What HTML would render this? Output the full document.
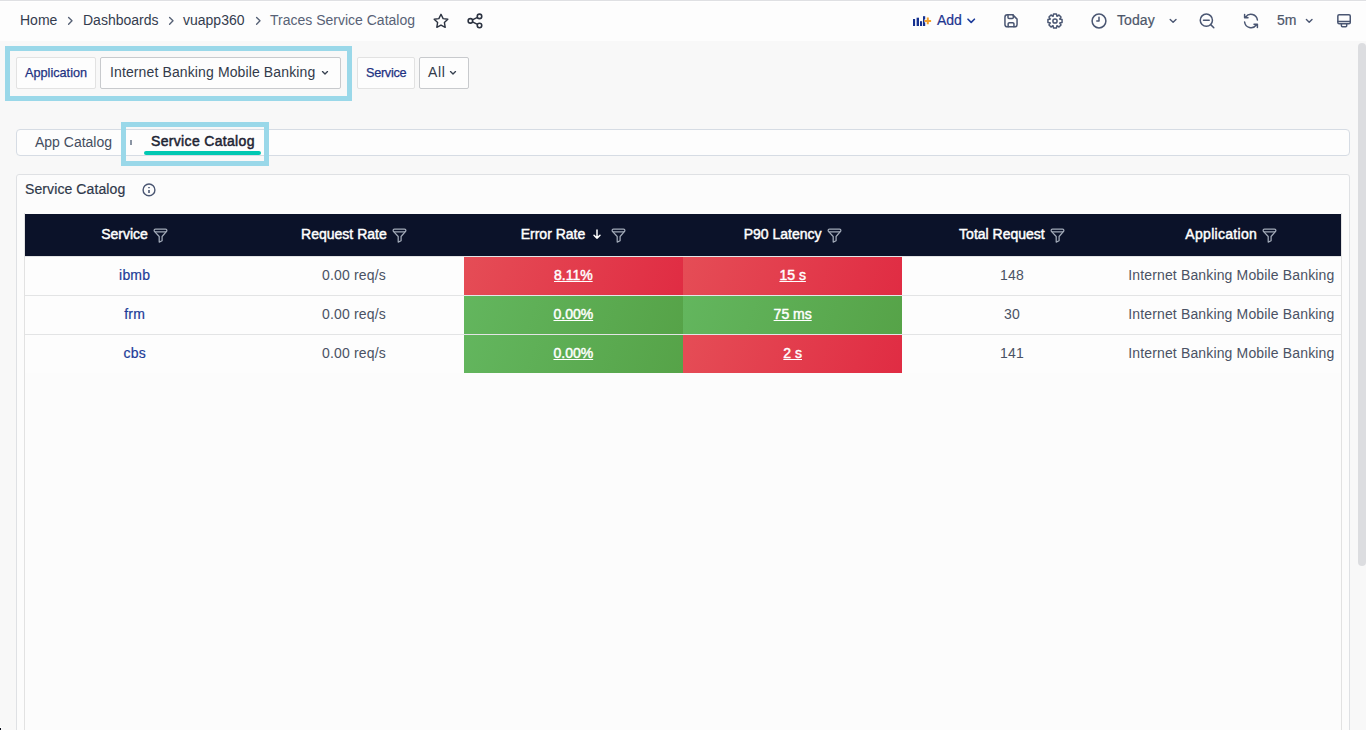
<!DOCTYPE html>
<html><head><meta charset="utf-8">
<style>
*{box-sizing:border-box;margin:0;padding:0}
html,body{width:1366px;height:730px;overflow:hidden}
body{background:#f8f8f8;font-family:"Liberation Sans",sans-serif;color:#323a4a;position:relative}
.a{position:absolute;white-space:nowrap}
#topline{left:0;top:0;width:1366px;height:1px;background:#dfe0e3}
#hdr{left:0;top:1px;width:1366px;height:40px;background:#fdfdfd;border-top:1px solid #fff}
.bc{top:12px;font-size:14px;line-height:16px;color:#343c4e}
.ic{stroke:#4a5672;fill:none;stroke-width:1.5;stroke-linecap:round;stroke-linejoin:round}
.hl{border:5px solid #9ad8e9}
.lbl{background:#fdfdfd;border:1px solid #e2e2e2;border-radius:2px}
.dd{background:#fdfdfd;border:1px solid #c8cacd;border-radius:2px}
.lbltxt{font-size:12.7px;color:#1d3282;line-height:14px;-webkit-text-stroke:0.25px #1d3282}
.ddtxt{font-size:14px;color:#323a4a;line-height:16px}
#tabbar{left:16px;top:129px;width:1334px;height:27px;background:#fdfdfd;border:1px solid #d6dce4;border-radius:4px}
#panel{left:16px;top:174px;width:1334px;height:600px;background:#fcfcfc;border:1px solid #dfe1e4;border-radius:3px}
#tblbox{left:24px;top:213px;width:1318px;height:600px;border-left:1px solid #e2e2e2;border-right:1px solid #e2e2e2}
#thead{left:25px;top:214px;width:1316px;height:42px;background:#0b1229}
.th{font-size:14px;color:#ffffff;line-height:16px;-webkit-text-stroke:0.45px #fff}
.rowl{left:25px;width:1316px;height:1px;background:#e3e4e5}
.td{font-size:14px;color:#4a5264;line-height:16px;letter-spacing:0.15px}
.svc{color:#1d3c98;-webkit-text-stroke:0.2px #1d3c98;letter-spacing:0.2px}
.red{background:linear-gradient(110deg,#e54d56 0%,#e02c43 100%)}
.grn{background:linear-gradient(110deg,#63b65e 0%,#56a348 100%)}
.cv{font-size:14px;-webkit-text-stroke:0.45px #fff;color:#fff;text-decoration:underline;text-underline-offset:1px;line-height:16px}
</style></head>
<body>
<div class="a" id="topline"></div><div class="a" id="hdr"></div>
<div class="a bc" style="left:20px">Home</div>
<svg class="a" style="left:67px;top:16px" width="7" height="10" viewBox="0 0 7 10"><path d="M1.6 1.4l3.4 3.4-3.4 3.4" stroke="#566175" stroke-width="1.35" fill="none" stroke-linecap="round" stroke-linejoin="round"/></svg>
<div class="a bc" style="left:83px">Dashboards</div>
<svg class="a" style="left:168px;top:16px" width="7" height="10" viewBox="0 0 7 10"><path d="M1.6 1.4l3.4 3.4-3.4 3.4" stroke="#566175" stroke-width="1.35" fill="none" stroke-linecap="round" stroke-linejoin="round"/></svg>
<div class="a bc" style="left:183px">vuapp360</div>
<svg class="a" style="left:255px;top:16px" width="7" height="10" viewBox="0 0 7 10"><path d="M1.6 1.4l3.4 3.4-3.4 3.4" stroke="#566175" stroke-width="1.35" fill="none" stroke-linecap="round" stroke-linejoin="round"/></svg>
<div class="a bc" style="left:270px;color:#586276">Traces Service Catalog</div>
<svg class="a" style="left:432px;top:13px" width="18" height="16" viewBox="0 0 18 16"><path transform="translate(9 1.3) scale(0.94) translate(-9 -1.3)" d="M9 1.3l2.25 4.55 5 .73-3.62 3.53.86 4.99L9 12.75l-4.48 2.35.86-4.99L1.75 6.58l5-.73z" stroke="#2b3240" stroke-width="1.5" fill="none" stroke-linejoin="round"/></svg>
<svg class="a" style="left:466px;top:13px" width="18" height="16" viewBox="0 0 18 16"><g stroke="#2b3240" stroke-width="1.6" fill="none"><circle cx="4.4" cy="7.9" r="2.25"/><circle cx="13.5" cy="3.4" r="2.25"/><circle cx="13.5" cy="12.5" r="2.25"/><path d="M6.4 6.9l5.1-2.5M6.4 8.9l5.1 2.5"/></g></svg>
<svg class="a" style="left:912px;top:14px" width="20" height="14" viewBox="0 0 20 14"><rect x="1" y="5" width="2.1" height="7" fill="#14308f"/><rect x="4.6" y="3.7" width="2.4" height="8.3" fill="#14308f"/><rect x="8" y="7.2" width="2.1" height="4.8" fill="#14308f"/><rect x="11" y="2.2" width="2.2" height="9.8" fill="#14308f"/><path d="M15.8 3.6v6.6M12.5 6.9h6.6" stroke="#fdfdfd" stroke-width="3.2"/><path d="M15.8 3.6v6.6M12.5 6.9h6.6" stroke="#f5a02a" stroke-width="2"/></svg>
<div class="a" style="left:937px;top:12px;font-size:14px;line-height:16px;color:#1d3590;-webkit-text-stroke:0.2px #1d3590">Add</div>
<svg class="a" style="left:967px;top:18px" width="9" height="6" viewBox="0 0 9 6"><path d="M1 1.2L4.2 4.4 7.4 1.2" stroke="#1b3a9a" stroke-width="1.6" fill="none" stroke-linecap="round" stroke-linejoin="round"/></svg>
<svg class="a" style="left:1003px;top:13px" width="16" height="16" viewBox="0 0 16 16"><path class="ic" d="M4.3 1.85H9.8L14.05 6.1V11.5a2.35 2.35 0 0 1-2.35 2.35H4.3a2.35 2.35 0 0 1-2.35-2.35V4.2a2.35 2.35 0 0 1 2.35-2.35z"/><path class="ic" d="M5 1.9v2.5a1 1 0 0 0 1 1h3.3a1 1 0 0 0 1-1V1.9M5.15 13.8v-2.8a1.2 1.2 0 0 1 1.2-1.2h3.4a1.2 1.2 0 0 1 1.2 1.2v2.8"/></svg>
<svg class="a" style="left:1046px;top:12px" width="18" height="18" viewBox="0 0 18 18"><path class="ic" d="M13.70 7.01L16.06 7.57L16.06 10.43L13.70 10.99L13.73 10.92L15.00 12.98L12.98 15.00L10.92 13.73L10.99 13.70L10.43 16.06L7.57 16.06L7.01 13.70L7.08 13.73L5.02 15.00L3.00 12.98L4.27 10.92L4.30 10.99L1.94 10.43L1.94 7.57L4.30 7.01L4.27 7.08L3.00 5.02L5.02 3.00L7.08 4.27L7.01 4.30L7.57 1.94L10.43 1.94L10.99 4.30L10.92 4.27L12.98 3.00L15.00 5.02L13.73 7.08z"/><circle class="ic" cx="9" cy="9" r="2.1"/></svg>
<svg class="a" style="left:1090px;top:12px" width="18" height="18" viewBox="0 0 18 18"><circle class="ic" cx="9" cy="9" r="6.9"/><path class="ic" d="M9 5.2V9H6.8"/></svg>
<div class="a" style="left:1117px;top:12px;font-size:14px;line-height:16px;color:#4d576a;letter-spacing:0.1px;-webkit-text-stroke:0.2px #4d576a">Today</div>
<svg class="a" style="left:1169px;top:18px" width="9" height="6" viewBox="0 0 9 6"><path d="M1.2 1.5L4.1 4.3 7 1.5" stroke="#4a5672" stroke-width="1.4" fill="none" stroke-linecap="round" stroke-linejoin="round"/></svg>
<svg class="a" style="left:1198px;top:12px" width="18" height="18" viewBox="0 0 18 18"><circle class="ic" cx="8.35" cy="8.2" r="6.1"/><path class="ic" d="M5.5 8.2h5.7M12.7 12.6l3.1 3.1"/></svg>
<svg class="a" style="left:1242px;top:12px" width="18" height="18" viewBox="0 0 18 18"><path class="ic" d="M15.4 8A6.5 6.5 0 0 0 3.7 5M2.6 2.4v3.4H6M2.6 10a6.5 6.5 0 0 0 11.7 3M15.4 15.6v-3.4H12"/></svg>
<div class="a" style="left:1277px;top:12px;font-size:14px;line-height:16px;color:#4d576a;-webkit-text-stroke:0.2px #4d576a">5m</div>
<svg class="a" style="left:1305px;top:18px" width="9" height="6" viewBox="0 0 9 6"><path d="M1.4 1.5L4.2 4.3 7 1.5" stroke="#4a5672" stroke-width="1.4" fill="none" stroke-linecap="round" stroke-linejoin="round"/></svg>
<svg class="a" style="left:1335px;top:12px" width="18" height="18" viewBox="0 0 18 18"><rect class="ic" x="2.85" y="2.65" width="12.4" height="9.2" rx="1.3"/><path class="ic" d="M2.85 9.5h12.4M6.4 12.2v1.6a1 1 0 0 0 1 1h3.3a1 1 0 0 0 1-1v-1.6"/></svg>
<div class="a" style="left:1358px;top:43px;width:8px;height:523px;background:#dcdde0;border-radius:4px"></div>
<div class="a hl" style="left:5px;top:46px;width:347px;height:55px"></div>
<div class="a lbl" style="left:16px;top:57px;width:80px;height:32px"></div>
<div class="a lbltxt" style="left:25px;top:66px">Application</div>
<div class="a dd" style="left:100px;top:57px;width:241px;height:32px"></div>
<div class="a ddtxt" style="left:110px;top:64px;letter-spacing:0.12px">Internet Banking Mobile Banking</div>
<svg class="a" style="left:321px;top:70px" width="8" height="6" viewBox="0 0 8 6"><path d="M1.5 1.6L4 4.1l2.5-2.5" stroke="#36404f" stroke-width="1.35" fill="none" stroke-linecap="round" stroke-linejoin="round"/></svg>
<div class="a lbl" style="left:357px;top:57px;width:58px;height:32px"></div>
<div class="a lbltxt" style="left:366px;top:66px;letter-spacing:-0.3px">Service</div>
<div class="a dd" style="left:419px;top:57px;width:50px;height:32px"></div>
<div class="a ddtxt" style="left:428px;top:64px;letter-spacing:0.6px">All</div>
<svg class="a" style="left:449px;top:70px" width="8" height="6" viewBox="0 0 8 6"><path d="M1.5 1.6L4 4.1l2.5-2.5" stroke="#36404f" stroke-width="1.35" fill="none" stroke-linecap="round" stroke-linejoin="round"/></svg>
<div class="a" id="tabbar"></div>
<div class="a" style="left:35px;top:134px;font-size:14px;line-height:16px;color:#444d60">App Catalog</div>
<div class="a hl" style="left:121px;top:122px;width:148px;height:44px"></div>
<div class="a" style="left:130px;top:140px;width:2px;height:5px;background:#8a94a3"></div>
<div class="a" style="left:151px;top:133px;font-size:14px;line-height:16px;color:#1e2433;letter-spacing:0.33px;-webkit-text-stroke:0.5px #1e2433">Service Catalog</div>
<div class="a" style="left:144px;top:151px;width:117px;height:4px;border-radius:2px;background:#00c8b2"></div>
<div class="a" id="panel"></div>
<div class="a" style="left:25px;top:181px;font-size:14px;line-height:16px;color:#2f384a;-webkit-text-stroke:0.2px #2f384a;letter-spacing:0.1px">Service Catalog</div>
<svg class="a" style="left:141px;top:182px" width="16" height="16" viewBox="0 0 16 16"><circle cx="8" cy="7.9" r="5.9" stroke="#4a5672" stroke-width="1.4" fill="none"/><path d="M8 8.9v1.2" stroke="#4a5672" stroke-width="1.6" stroke-linecap="square"/><rect x="7.2" y="5" width="1.6" height="1.2" fill="#4a5672"/></svg>
<div class="a" id="tblbox"></div><div class="a" id="thead"></div>
<div class="a th" style="left:25.00px;top:213px;width:219.33px;height:42px;display:flex;align-items:center;justify-content:center"><span style="letter-spacing:0px">Service</span><svg width="15" height="15" viewBox="0 0 15 15" style="margin-left:5.2px;flex:none;position:relative;top:1px"><g stroke="#a2aab8" stroke-width="1.25" fill="none" stroke-linejoin="round"><rect x="1.1" y="1.2" width="12.8" height="2.7" rx="1.35"/><path d="M1.9 3.9l4.3 4.6v5.6l2.9-1.4V8.5l4-4.6"/></g></svg></div>
<div class="a th" style="left:244.33px;top:213px;width:219.33px;height:42px;display:flex;align-items:center;justify-content:center"><span style="letter-spacing:0px">Request Rate</span><svg width="15" height="15" viewBox="0 0 15 15" style="margin-left:5.2px;flex:none;position:relative;top:1px"><g stroke="#a2aab8" stroke-width="1.25" fill="none" stroke-linejoin="round"><rect x="1.1" y="1.2" width="12.8" height="2.7" rx="1.35"/><path d="M1.9 3.9l4.3 4.6v5.6l2.9-1.4V8.5l4-4.6"/></g></svg></div>
<div class="a th" style="left:463.67px;top:213px;width:219.33px;height:42px;display:flex;align-items:center;justify-content:center"><span style="letter-spacing:0px">Error Rate</span><svg width="10" height="12" viewBox="0 0 10 12" style="margin-left:7px;flex:none"><path d="M5 2v8.3M2 7.3L5 10.3l3-3" stroke="#fff" stroke-width="1.5" fill="none" stroke-linecap="round" stroke-linejoin="round"/></svg><svg width="15" height="15" viewBox="0 0 15 15" style="margin-left:8.7px;flex:none;position:relative;top:1px"><g stroke="#a2aab8" stroke-width="1.25" fill="none" stroke-linejoin="round"><rect x="1.1" y="1.2" width="12.8" height="2.7" rx="1.35"/><path d="M1.9 3.9l4.3 4.6v5.6l2.9-1.4V8.5l4-4.6"/></g></svg></div>
<div class="a th" style="left:683.00px;top:213px;width:219.33px;height:42px;display:flex;align-items:center;justify-content:center"><span style="letter-spacing:0px">P90 Latency</span><svg width="15" height="15" viewBox="0 0 15 15" style="margin-left:5.2px;flex:none;position:relative;top:1px"><g stroke="#a2aab8" stroke-width="1.25" fill="none" stroke-linejoin="round"><rect x="1.1" y="1.2" width="12.8" height="2.7" rx="1.35"/><path d="M1.9 3.9l4.3 4.6v5.6l2.9-1.4V8.5l4-4.6"/></g></svg></div>
<div class="a th" style="left:902.33px;top:213px;width:219.33px;height:42px;display:flex;align-items:center;justify-content:center"><span style="letter-spacing:0px">Total Request</span><svg width="15" height="15" viewBox="0 0 15 15" style="margin-left:5.2px;flex:none;position:relative;top:1px"><g stroke="#a2aab8" stroke-width="1.25" fill="none" stroke-linejoin="round"><rect x="1.1" y="1.2" width="12.8" height="2.7" rx="1.35"/><path d="M1.9 3.9l4.3 4.6v5.6l2.9-1.4V8.5l4-4.6"/></g></svg></div>
<div class="a th" style="left:1121.67px;top:213px;width:219.33px;height:42px;display:flex;align-items:center;justify-content:center"><span style="letter-spacing:0.3px">Application</span><svg width="15" height="15" viewBox="0 0 15 15" style="margin-left:5.2px;flex:none;position:relative;top:1px"><g stroke="#a2aab8" stroke-width="1.25" fill="none" stroke-linejoin="round"><rect x="1.1" y="1.2" width="12.8" height="2.7" rx="1.35"/><path d="M1.9 3.9l4.3 4.6v5.6l2.9-1.4V8.5l4-4.6"/></g></svg></div>
<div class="a" style="left:25px;top:256px;width:1316px;height:117px;background:#fdfdfd"></div>
<div class="a rowl" style="top:256px"></div>
<div class="a red" style="left:464px;top:257px;width:219px;height:38px"></div>
<div class="a red" style="left:683px;top:257px;width:219px;height:38px"></div>
<div class="a td svc" style="left:25.00px;top:255px;width:219.33px;height:39px;display:flex;align-items:center;justify-content:center">ibmb</div>
<div class="a td" style="left:244.33px;top:255px;width:219.33px;height:39px;display:flex;align-items:center;justify-content:center">0.00 req/s</div>
<div class="a cv" style="left:463.67px;top:255px;width:219.33px;height:39px;display:flex;align-items:center;justify-content:center">8.11%</div>
<div class="a cv" style="left:683.00px;top:255px;width:219.33px;height:39px;display:flex;align-items:center;justify-content:center">15 s</div>
<div class="a td" style="left:902.33px;top:255px;width:219.33px;height:39px;display:flex;align-items:center;justify-content:center">148</div>
<div class="a td" style="left:1121.67px;top:255px;width:219.33px;height:39px;display:flex;align-items:center;justify-content:center">Internet Banking Mobile Banking</div>
<div class="a rowl" style="top:295px"></div>
<div class="a grn" style="left:464px;top:296px;width:219px;height:38px"></div>
<div class="a grn" style="left:683px;top:296px;width:219px;height:38px"></div>
<div class="a td svc" style="left:25.00px;top:294px;width:219.33px;height:39px;display:flex;align-items:center;justify-content:center">frm</div>
<div class="a td" style="left:244.33px;top:294px;width:219.33px;height:39px;display:flex;align-items:center;justify-content:center">0.00 req/s</div>
<div class="a cv" style="left:463.67px;top:294px;width:219.33px;height:39px;display:flex;align-items:center;justify-content:center">0.00%</div>
<div class="a cv" style="left:683.00px;top:294px;width:219.33px;height:39px;display:flex;align-items:center;justify-content:center">75 ms</div>
<div class="a td" style="left:902.33px;top:294px;width:219.33px;height:39px;display:flex;align-items:center;justify-content:center">30</div>
<div class="a td" style="left:1121.67px;top:294px;width:219.33px;height:39px;display:flex;align-items:center;justify-content:center">Internet Banking Mobile Banking</div>
<div class="a rowl" style="top:334px"></div>
<div class="a grn" style="left:464px;top:335px;width:219px;height:38px"></div>
<div class="a red" style="left:683px;top:335px;width:219px;height:38px"></div>
<div class="a td svc" style="left:25.00px;top:333px;width:219.33px;height:39px;display:flex;align-items:center;justify-content:center">cbs</div>
<div class="a td" style="left:244.33px;top:333px;width:219.33px;height:39px;display:flex;align-items:center;justify-content:center">0.00 req/s</div>
<div class="a cv" style="left:463.67px;top:333px;width:219.33px;height:39px;display:flex;align-items:center;justify-content:center">0.00%</div>
<div class="a cv" style="left:683.00px;top:333px;width:219.33px;height:39px;display:flex;align-items:center;justify-content:center">2 s</div>
<div class="a td" style="left:902.33px;top:333px;width:219.33px;height:39px;display:flex;align-items:center;justify-content:center">141</div>
<div class="a td" style="left:1121.67px;top:333px;width:219.33px;height:39px;display:flex;align-items:center;justify-content:center">Internet Banking Mobile Banking</div>
<div class="a rowl" style="top:295px;left:464px;width:438px;background:#e4e6e9"></div>
<div class="a" style="left:0;top:727px;width:3px;height:1px;background:#ffffff"></div><div class="a" style="left:0;top:728px;width:1px;height:2px;background:#0b0f1a"></div>
</body></html>
